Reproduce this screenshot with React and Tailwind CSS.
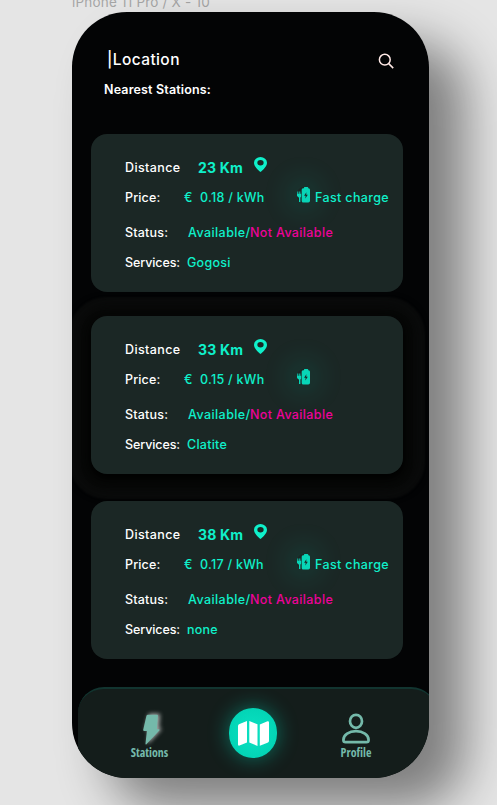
import React from "react";

const stations = [
  { distance: "23 Km", price: "0.18 / kWh", fast: true, service: "Gogosi", gap: "mt-[34px]" },
  { distance: "33 Km", price: "0.15 / kWh", fast: false, service: "Clatite", gap: "mt-6", halo: true },
  { distance: "38 Km", price: "0.17 / kWh", fast: true, service: "none", gap: "mt-[27px]" },
];

function Pin() {
  return (
    <svg viewBox="0 0 12 16" className="mb-[7px] -ml-px h-[15px] w-[13px]" preserveAspectRatio="none" fill="#0ff0ca">
      <path fillRule="evenodd" d="M6 0a6 6 0 0 0-6 6c0 4.200 3.800 7.400 6 10 2.200-2.600 6-5.800 6-10a6 6 0 0 0-6-6Zm0 3.200a2.900 2.900 0 1 1 0 5.800 2.900 2.900 0 0 1 0-5.800Z" />
    </svg>
  );
}

function Battery() {
  return (
    <svg viewBox="0 0 13 16" className="h-4 w-[13px]" fill="#08d5b7">
      <path fillRule="evenodd" d="M6 1.200h1V.6Q7 0 7.600 0h3q.6 0 .6.6v.6h.4Q13 1.200 13 2.800v11Q13 15.500 11.300 15.500H6.200Q4.700 15.500 4.700 14V2.800Q4.700 1.200 6 1.200ZM9.400 5.200 7.100 8.700h1.600l-.4 2.700 2.500-3.600H9.200Z" />
      <path d="M.3 4.500h1v2.300h1V4.500h1v2.300h.9v2.400q0 1-.8 1.400v4.500H2v-4.400L.6 9.600Q0 9.100 0 8.400V6.800h.3Z" />
    </svg>
  );
}

function StationCard({ s }) {
  return (
    <section
      className={`${s.gap} ${s.halo ? "shadow-[0_4px_8px_#000,0_3px_14px_12px_#060706,0_3px_2px_22px_#0a0b0b]" : ""} ml-[19px] h-[158px] w-[312px] shrink-0 rounded-[16px] bg-[#1b2725] pt-[18px] pl-[34px] text-[12.5px] font-medium whitespace-nowrap text-white`}
    >
      <div className="flex h-8 items-center">
        <span className="w-[73px] tracking-[0.4px]">Distance</span>
        <b className="mb-[2px] w-[57px] text-[14px] font-bold tracking-[0.2px] text-[#0ff0ca]">{s.distance}</b>
        <Pin />
      </div>
      <div className="flex h-[26px] items-center text-[#0ff0ca]">
        <span className="mt-[2px] w-[59px] text-white tracking-[0.15px]">Price:</span>
        <span className="mt-[2px] w-4">€</span>
        <span className="mt-[2px] w-[97px] tracking-[0.28px]">{s.price}</span>
        <span className="mb-[5px] rounded-full shadow-[0_0_28px_8px_#08d5b726]">
          <Battery />
        </span>
        {s.fast && <span className="mt-[2px] ml-[5px] tracking-[0.36px]">Fast charge</span>}
      </div>
      <div className="flex h-11 items-center">
        <span className="mt-[2px] w-[63px] tracking-[0.2px]">Status:</span>
        <span className="mt-[2px] w-[62px] tracking-[0.42px] text-[#0ff0ca]">Available/</span>
        <span className="mt-[2px] tracking-[0.36px] text-[#ed0298]">Not Available</span>
      </div>
      <div className="flex h-[19px] items-center">
        <span className="w-[62px] tracking-[-0.1px]">Services:</span>
        <span className="tracking-[0.25px] text-[#0ff0ca]">{s.service}</span>
      </div>
    </section>
  );
}

function BottomNav() {
  return (
    <nav className="mt-auto ml-[6px] flex h-[91px] w-[359px] shrink-0 rounded-t-[26px] border-t-2 border-[#123530] bg-[#141d1b] text-[#74b9aa]">
      <div className="flex w-[143px] flex-col items-center pt-[25px]">
        <svg viewBox="0 0 17 31" className="ml-[4px] h-[31px] w-[17px] overflow-visible drop-shadow-[2px_-1px_2px_rgba(255,255,255,0.65)]">
          <path d="M5 .8h9q1.200 0 .9 1.200l-1 13.200h1.900q1.300 0 .5 1.200L3.700 30q-1.300 1.300-1.200-.4L3.900 17H1.200Q0 17 .2 15.700L3.400 2Q3.700.8 5 .8Z" fill="currentColor" />
        </svg>
        <span className="mt-px font-['Open_Sans','Noto_Sans',sans-serif] text-[12px] leading-[14px] font-bold [font-stretch:80%]">Stations</span>
      </div>
      <div className="flex w-[64px] justify-center pt-[19px]">
        <div className="flex h-[50px] w-12 items-center justify-center rounded-full bg-radial from-[#0be2c3] to-[#00cfb0] shadow-[0_0_20px_1px_#00d9b966]">
          <svg viewBox="0 0 31 25" className="h-[25px] w-[31px]" fill="white">
            <path d="M1.500 3 9 0v21.500L1.500 24.500Q0 25 0 23.500V5Q0 3.500 1.500 3ZM11.300 0 19.500 3.300V25L11.300 21.500ZM21.800 3.400 29.500.3Q31 0 31 1.500V20q0 1.200-1.500 1.800l-7.700 3Z" />
          </svg>
        </div>
      </div>
      <div className="flex w-[142px] flex-col items-center pt-[24px]">
        <svg viewBox="0 0 28 31" className="mb-px h-[31px] w-7" fill="none" stroke="currentColor" strokeWidth="2.700">
          <ellipse cx="14" cy="8.300" rx="6" ry="6.500" />
          <path d="M1.400 27c0-5.200 5.700-8.800 12.600-8.800S26.600 21.800 26.600 27q0 2.200-2.200 2.200H3.600Q1.400 29.200 1.400 27Z" />
        </svg>
        <span className="mt-px font-['Open_Sans','Noto_Sans',sans-serif] text-[12px] leading-[14px] font-bold [font-stretch:80%]">Profile</span>
      </div>
    </nav>
  );
}

export default function App() {
  return (
    <div className="flex h-[805px] w-[497px] flex-col overflow-hidden bg-[#e5e5e5] pl-[72px] font-[Inter,sans-serif]">
      <div className="-mt-[7px] h-[19px] shrink-0 text-[13.5px] leading-[18px] tracking-[0.2px] whitespace-nowrap text-[#a5a5a5]">iPhone 11 Pro / X - 10</div>
      <div className="h-[766px] w-[357px] shrink-0 rounded-[55px] shadow-[36px_30px_50px_rgba(0,0,0,0.45)]">
        <main className="flex h-full flex-col overflow-hidden rounded-[55px] bg-[#030405] text-white">
          <header className="mt-[38px] flex h-5 shrink-0 items-center justify-between pr-[35px] pl-[35px]">
            <h1 className="text-[15.5px] font-medium tracking-[0.4px]">|Location</h1>
            <svg viewBox="0 0 16 16" className="mt-px h-4 w-4" fill="none" stroke="#ffe9e6" strokeWidth="1.500">
              <circle cx="6.800" cy="6.700" r="5.400" />
              <path d="m10.700 10.600 4.500 4.500" />
            </svg>
          </header>
          <h2 className="mt-[10px] ml-[32px] h-5 shrink-0 text-[12.5px] leading-5 font-semibold tracking-[0.16px]">Nearest Stations:</h2>
          {stations.map((s) => (
            <StationCard key={s.distance} s={s} />
          ))}
          <BottomNav />
        </main>
      </div>
    </div>
  );
}
